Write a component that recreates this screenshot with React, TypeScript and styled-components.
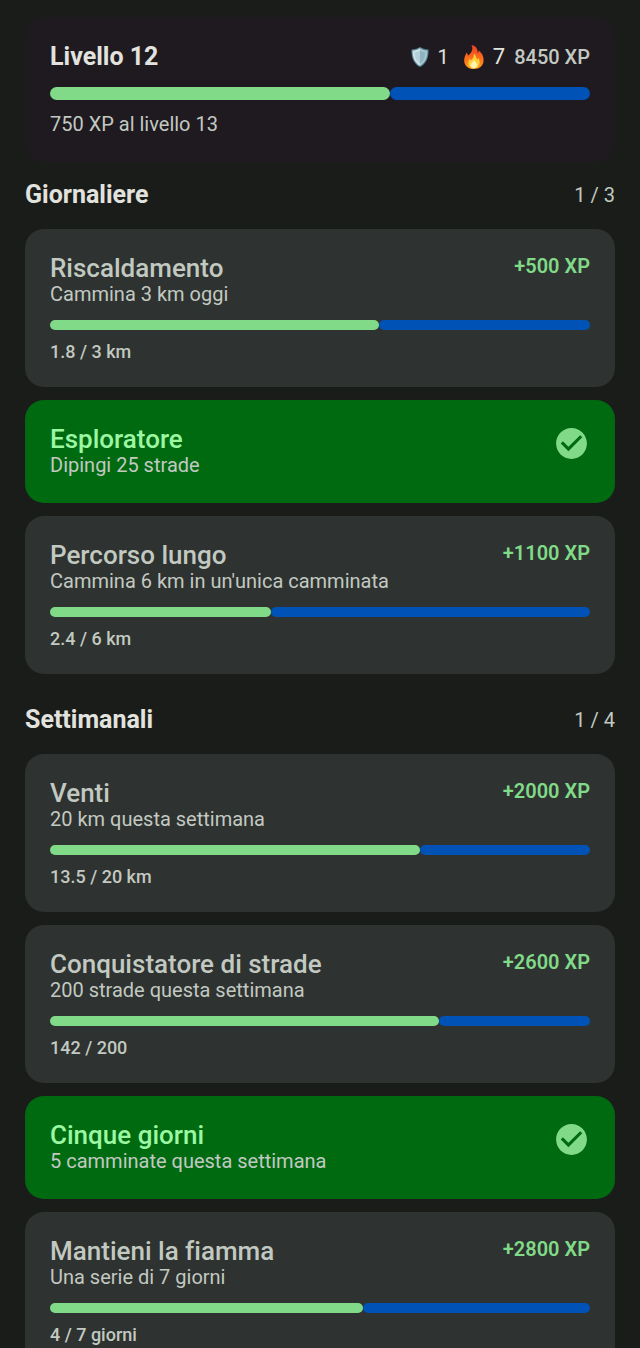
import React from "react";
import styled, { createGlobalStyle } from "styled-components";

const GlobalStyle = createGlobalStyle`
  * { box-sizing: border-box; }
  body {
    margin: 0;
    background: #1a1c1a;
    color: #e2e3df;
    font-family: Roboto, "Liberation Sans", sans-serif;
    font-variant-ligatures: none;
  }
  h1, h2, h3, p { margin: 0; }
`;

const Screen = styled.main`
  height: 100vh;
  overflow-y: auto;
  scrollbar-width: none;
  padding: 17px 25px 25px;
`;

const LevelCard = styled.section`
  padding: 25px;
  border-radius: 19px;
  background: #1f1a20;
`;

const LevelTop = styled.div`
  display: flex;
  align-items: center;
  justify-content: space-between;
  height: 29px;
`;

const Heading = styled.h2`
  font-size: 25px;
  line-height: 36px;
  font-weight: 700;
`;

const Stats = styled.div`
  display: flex;
  align-items: center;
  gap: 9px;
  line-height: 28px;
`;

const Stat = styled.span<{ $large?: boolean }>`
  display: flex;
  align-items: center;
  gap: 8px;
  padding-right: ${(p) => (p.$large ? 0 : 5)}px;
  font-size: ${(p) => (p.$large ? 22 : 20)}px;
`;

const Total = styled.span`
  font-size: 20px;
  font-weight: 500;
  color: #c2c9c1;
`;

const Bar = styled.div<{ $thick?: boolean }>`
  display: flex;
  height: ${(p) => (p.$thick ? 13 : 10)}px;
`;

const Fill = styled.span`
  border-radius: 7px;
  background: #80da88;
`;

const Rest = styled.span`
  flex: 1;
  border-radius: 7px;
  background: #0052b6;
`;

const Supporting = styled.p`
  font-size: 20px;
  line-height: 25px;
  color: #c2c9c1;
`;

const SectionHeader = styled.header`
  display: flex;
  align-items: center;
  justify-content: space-between;
  padding: 15px 0 16px;
`;

const Count = styled.span`
  font-size: 20px;
  color: #c2c9c1;
`;

const List = styled.ul`
  display: flex;
  flex-direction: column;
  gap: 13px;
  margin: 0 0 13px;
  padding: 0;
  list-style: none;
`;

const Card = styled.li<{ $done: boolean }>`
  padding: 25px;
  border-radius: 19px;
  background: ${(p) => (p.$done ? "#006a11" : "#2e3230")};
  color: ${(p) => (p.$done ? "#9cf7a2" : "#c2c9c1")};
`;

const CardTop = styled.div`
  display: flex;
  align-items: flex-start;
  justify-content: space-between;
`;

const Title = styled.h3`
  font-size: 26px;
  line-height: 28px;
  font-weight: 500;
`;

const Reward = styled.span`
  font-size: 20px;
  line-height: 24px;
  font-weight: 600;
  color: #80da88;
`;

const CheckIcon = styled.svg`
  width: 37px;
  height: 37px;
  fill: #80da88;
`;

const CardBar = styled.div`
  margin-top: 13px;
`;

const Amount = styled.p`
  padding-top: 12px;
  font-size: 18px;
  line-height: 20px;
  font-weight: 500;
`;

const LevelBar = styled.div`
  padding: 16px 0 12px;
`;

function Progress({ value, label, thick }: { value: number; label: string; thick?: boolean }) {
  return (
    <Bar $thick={thick} role="progressbar" aria-label={label} aria-valuenow={value} aria-valuemin={0} aria-valuemax={100}>
      <Fill style={{ width: `${value}%` }} />
      <Rest />
    </Bar>
  );
}

function Shield() {
  return (
    <svg width="20" height="22" viewBox="0 0 20 22" aria-hidden="true">
      <path d="M10 1C7.500 2.800 4.500 3.500 1.500 3.400C1.200 10.500 3 17.500 10 21C17 17.500 18.800 10.500 18.500 3.400C15.500 3.500 12.500 2.800 10 1Z" fill="#588796" />
      <path d="M10 2.300C7.700 3.900 5.200 4.600 2.600 4.600C2.600 10.500 4.100 16.700 10 19.800Z" fill="#d3e4e9" />
      <path d="M10 2.300C12.300 3.900 14.800 4.600 17.400 4.600C17.400 10.500 15.900 16.700 10 19.800Z" fill="#a9c8d1" />
      <path d="M10 4.500C8 5.700 6.300 6.200 4.500 6.300C4.800 11.500 6.200 15.300 10 17.700Z" fill="#b4d0d8" />
      <path d="M10 4.500C12 5.700 13.700 6.200 15.500 6.300C15.200 11.500 13.800 15.300 10 17.700Z" fill="#8fb4c0" />
    </svg>
  );
}

function Flame() {
  return (
    <svg width="22" height="26" viewBox="0 0 22 26" aria-hidden="true">
      <defs>
        <linearGradient id="flame" x1="0" y1="0" x2="0" y2="1">
          <stop offset="0" stopColor="#ed3b24" />
          <stop offset="0.500" stopColor="#fb6a1c" />
          <stop offset="1" stopColor="#ff9f1c" />
        </linearGradient>
      </defs>
      <path d="M8.500 1C13 1.800 15 5 14.600 9.200C15.400 8.600 15.700 7.500 15.600 6.300C19 9 20.800 12.500 20.600 16.500C20.300 21.800 16.500 25 11 25C5.200 25 1.300 21.700 1.200 16.400C1.100 13 2.800 10.500 3.600 8.400C4.500 9.300 4.700 10.500 4.900 11.600C8.500 9.200 10.500 5.500 8.500 1Z" fill="url(#flame)" />
      <path d="M10.800 9.800C13.500 12 13 13.700 14.200 15.800C14.900 15.200 15.100 14.500 15.100 13.800C16.700 15.900 17.100 18.200 16.200 20.500C15.300 23 13.500 24.300 11 24.300C7.700 24.300 5.500 22.300 5.400 19.400C5.300 17.300 6.200 16.200 6.700 14.800C7.300 15.300 7.500 15.800 7.700 16.600C10.200 14.700 11.200 12.500 10.800 9.800Z" fill="#ffd23c" />
      <path d="M10.900 15.800C11.500 17.700 14.500 19 14 21.300C13.700 23.200 12.500 24.200 10.900 24.200C8.900 24.200 7.500 22.800 7.700 21C8 19 10.700 18.300 10.900 15.800Z" fill="#fff6b4" />
    </svg>
  );
}

type Quest = { title: string; text: string; xp?: number; value?: number; amount?: string };

const daily: Quest[] = [
  { title: "Riscaldamento", text: "Cammina 3 km oggi", xp: 500, value: 61, amount: "1.8 / 3 km" },
  { title: "Esploratore", text: "Dipingi 25 strade" },
  { title: "Percorso lungo", text: "Cammina 6 km in un'unica camminata", xp: 1100, value: 41, amount: "2.4 / 6 km" },
];

const weekly: Quest[] = [
  { title: "Venti", text: "20 km questa settimana", xp: 2000, value: 68.5, amount: "13.5 / 20 km" },
  { title: "Conquistatore di strade", text: "200 strade questa settimana", xp: 2600, value: 72, amount: "142 / 200" },
  { title: "Cinque giorni", text: "5 camminate questa settimana" },
  { title: "Mantieni la fiamma", text: "Una serie di 7 giorni", xp: 2800, value: 58, amount: "4 / 7 giorni" },
];

function QuestCard({ quest }: { quest: Quest }) {
  const done = quest.value === undefined;
  return (
    <Card $done={done}>
      <CardTop>
        <div>
          <Title>{quest.title}</Title>
          <Supporting>{quest.text}</Supporting>
        </div>
        {done ? (
          <CheckIcon viewBox="0 0 24 24" role="img" aria-label="Completata">
            <path d="M12 2C6.480 2 2 6.480 2 12s4.480 10 10 10 10-4.480 10-10S17.520 2 12 2zm-2 15l-5-5 1.410-1.410L10 14.170l7.590-7.590L19 8l-9 9z" />
          </CheckIcon>
        ) : (
          <Reward>+{quest.xp} XP</Reward>
        )}
      </CardTop>
      {quest.value !== undefined && (
        <CardBar>
          <Progress value={quest.value} label={quest.title} />
          <Amount>{quest.amount}</Amount>
        </CardBar>
      )}
    </Card>
  );
}

function QuestSection({ title, count, quests }: { title: string; count: string; quests: Quest[] }) {
  return (
    <section>
      <SectionHeader>
        <Heading>{title}</Heading>
        <Count>{count}</Count>
      </SectionHeader>
      <List>
        {quests.map((q) => (
          <QuestCard key={q.title} quest={q} />
        ))}
      </List>
    </section>
  );
}

export default function App() {
  return (
    <>
      <GlobalStyle />
      <Screen>
        <LevelCard>
          <LevelTop>
            <Heading as="h1">Livello 12</Heading>
            <Stats>
              <Stat><Shield />1</Stat>
              <Stat $large><Flame />7</Stat>
              <Total>8450 XP</Total>
            </Stats>
          </LevelTop>
          <LevelBar>
            <Progress value={63} label="Livello 12" thick />
          </LevelBar>
          <Supporting>750 XP al livello 13</Supporting>
        </LevelCard>
        <QuestSection title="Giornaliere" count="1 / 3" quests={daily} />
        <QuestSection title="Settimanali" count="1 / 4" quests={weekly} />
      </Screen>
    </>
  );
}
